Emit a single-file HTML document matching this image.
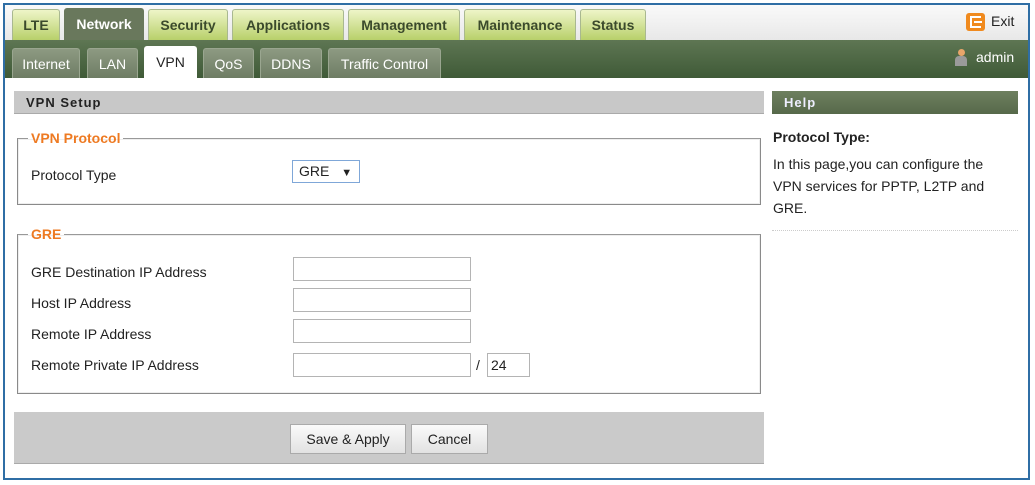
<!DOCTYPE html>
<html><head><meta charset="utf-8"><style>
*{box-sizing:border-box;margin:0;padding:0}
body{width:1035px;height:485px;background:#fff;position:relative;font-family:"Liberation Sans",Arial,sans-serif;font-size:14px;color:#222;overflow:hidden}
.a{position:absolute}
.frame{left:3px;top:3px;width:1027px;height:477px;border:2px solid #2f6ea5}
.top{left:5px;top:5px;width:1023px;height:35px;background:linear-gradient(#fafafa,#e8e8e8)}
.band{left:5px;top:40px;width:1023px;height:38px;background:linear-gradient(#5e7653,#3f5a37)}
.tab{top:9px;height:31px;background:linear-gradient(#eef5c8,#b8d06a);border:1px solid #a9b890;border-bottom:none;border-radius:3px 3px 0 0;text-align:center;font-weight:bold;font-size:14px;line-height:31px;color:#3b4a2c}
.tab.on{background:#69785c;color:#fff;border-color:#69785c;top:8px;height:32px}
.st{top:48px;height:30px;background:linear-gradient(#8d9a82,#6e7d64);border-radius:3px 3px 0 0;text-align:center;font-size:14px;line-height:30px;color:#fff;border:1px solid #9aa690;border-bottom:none}
.st.on{background:#fff;color:#222;top:46px;height:32px;border-color:#fff}
.bar{top:91px;height:23px;font-weight:bold;font-size:13px;letter-spacing:1px;line-height:23px;padding-left:12px}
fieldset{position:absolute;border:1px solid #8a8a8a;border-top-color:#999;box-shadow:inset 0 0 0 1px #eee}
legend{color:#ee7a22;font-weight:bold;font-size:14px;padding:0 3px;margin-left:10px}
.lbl{left:31px;font-size:14px}
.in{left:293px;width:178px;height:24px;border:1px solid #b4b4b4;background:#fff}
.btn{top:424px;height:30px;border:1px solid #aaa;background:linear-gradient(#fafafa,#e2e2e2);font-size:14px;text-align:center;line-height:28px;color:#222}
</style></head><body>
<div class="a top"></div>
<div class="a tab" style="left:12px;width:48px">LTE</div>
<div class="a tab on" style="left:64px;width:80px">Network</div>
<div class="a tab" style="left:148px;width:80px">Security</div>
<div class="a tab" style="left:232px;width:112px">Applications</div>
<div class="a tab" style="left:348px;width:112px">Management</div>
<div class="a tab" style="left:464px;width:112px">Maintenance</div>
<div class="a tab" style="left:580px;width:66px">Status</div>
<div class="a" style="left:966px;top:13px;width:19px;height:18px;background:#f08a1e;border-radius:3px"><div class="a" style="left:4px;top:3px;width:11px;height:12px;border:2px solid #fff;border-right:none"></div><div class="a" style="left:8px;top:8px;width:8px;height:2px;background:#fff"></div></div>
<div class="a" style="left:991px;top:13px;font-size:14px">Exit</div>
<div class="a band"></div>
<div class="a st" style="left:12px;width:68px">Internet</div>
<div class="a st" style="left:87px;width:51px">LAN</div>
<div class="a st on" style="left:144px;width:53px">VPN</div>
<div class="a st" style="left:203px;width:51px">QoS</div>
<div class="a st" style="left:260px;width:62px">DDNS</div>
<div class="a st" style="left:328px;width:113px">Traffic Control</div>
<div class="a" style="left:958px;top:49px;width:7px;height:7px;border-radius:50%;background:#e8a56a"></div>
<div class="a" style="left:955px;top:56px;width:12px;height:10px;border-radius:4px 4px 0 0;background:#9a9a9a"></div>
<div class="a" style="left:976px;top:49px;color:#fff;font-size:14px">admin</div>
<div class="a bar" style="left:14px;width:750px;background:#c8c8c8;border-bottom:1px solid #aaa">VPN Setup</div>
<div class="a bar" style="left:772px;width:246px;background:linear-gradient(#6e805f,#56694a);color:#eef">Help</div>
<fieldset style="left:17px;top:130px;width:744px;height:75px"><legend>VPN Protocol</legend></fieldset>
<div class="a lbl" style="top:167px">Protocol Type</div>
<div class="a" style="left:292px;top:160px;width:68px;height:23px;border:1px solid #7fa7d8;background:#fff;font-size:14px;line-height:21px;padding-left:6px">GRE <span style="font-size:11px;margin-left:8px">▼</span></div>
<fieldset style="left:17px;top:226px;width:744px;height:168px"><legend>GRE</legend></fieldset>
<div class="a lbl" style="top:264px">GRE Destination IP Address</div>
<div class="a lbl" style="top:295px">Host IP Address</div>
<div class="a lbl" style="top:326px">Remote IP Address</div>
<div class="a lbl" style="top:357px">Remote Private IP Address</div>
<div class="a in" style="top:257px"></div>
<div class="a in" style="top:288px"></div>
<div class="a in" style="top:319px"></div>
<div class="a in" style="top:353px"></div>
<div class="a" style="left:476px;top:357px;font-size:14px">/</div>
<div class="a in" style="left:487px;top:353px;width:43px;padding-left:3px;line-height:22px">24</div>
<div class="a" style="left:14px;top:412px;width:750px;height:52px;background:#cacaca;border-bottom:1px solid #aaa"></div>
<div class="a btn" style="left:290px;width:116px">Save &amp; Apply</div>
<div class="a btn" style="left:411px;width:77px">Cancel</div>
<div class="a" style="left:773px;top:129px;font-weight:bold;font-size:14px">Protocol Type:</div>
<div class="a" style="left:773px;top:153px;width:240px;font-size:14px;line-height:22px">In this page,you can configure the VPN services for PPTP, L2TP and GRE.</div>
<div class="a" style="left:772px;top:230px;width:246px;border-top:1px dotted #ccc"></div>
<div class="a frame"></div>
</body></html>
